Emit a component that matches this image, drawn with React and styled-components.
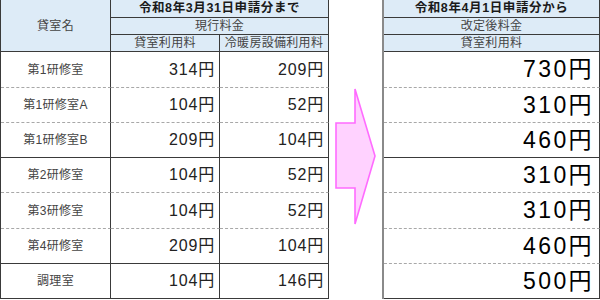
import styled, { createGlobalStyle } from 'styled-components'

const GlobalStyle = createGlobalStyle`
  * { box-sizing: border-box; }
  body {
    margin: 0;
    background: #fff;
    font-family: "Liberation Sans", "Noto Sans CJK JP", sans-serif;
  }
`

const rooms = [
  { name: '第1研修室', room: '314円', air: '209円', next: '730円', h: 36 },
  { name: '第1研修室A', room: '104円', air: '52円', next: '310円', h: 35 },
  { name: '第1研修室B', room: '209円', air: '104円', next: '460円', h: 35, solid: true },
  { name: '第2研修室', room: '104円', air: '52円', next: '310円', h: 35 },
  { name: '第3研修室', room: '104円', air: '52円', next: '310円', h: 36 },
  { name: '第4研修室', room: '209円', air: '104円', next: '460円', h: 35, solid: true },
  { name: '調理室', room: '104円', air: '146円', next: '500円', h: 35, solid: true },
]

export default function App() {
  return (
    <>
      <GlobalStyle />
      <Page>
        <LeftTable>
          <colgroup>
            <col style={{ width: 110 }} />
            <col style={{ width: 109 }} />
            <col style={{ width: 109 }} />
          </colgroup>
          <thead>
            <tr>
              <HeadCell rowSpan={3} $h={51}>貸室名</HeadCell>
              <HeadCell colSpan={2} $h={18} $bold>令和8年3月31日申請分まで</HeadCell>
            </tr>
            <tr>
              <HeadCell colSpan={2} $h={17}>現行料金</HeadCell>
            </tr>
            <tr>
              <HeadCell $h={17}>貸室利用料</HeadCell>
              <HeadCell $h={17}>冷暖房設備利用料</HeadCell>
            </tr>
          </thead>
          <tbody>
            {rooms.map((r) => (
              <tr key={r.name}>
                <NameCell $h={r.h} $solid={r.solid}>{r.name}</NameCell>
                <PriceCell $h={r.h} $solid={r.solid}>{r.room}</PriceCell>
                <PriceCell $h={r.h} $solid={r.solid}>{r.air}</PriceCell>
              </tr>
            ))}
          </tbody>
        </LeftTable>

        <ArrowArea>
          <svg width="42" height="138" viewBox="0 0 42 138">
            <polygon
              points="1,35 20,35 20,1 40,68 20,136 20,100 1,100"
              fill="#ffd2ff"
              stroke="#ff6bff"
              strokeWidth="1.6"
              strokeLinejoin="miter"
            />
          </svg>
        </ArrowArea>

        <RightTable>
          <thead>
            <tr>
              <HeadCell $h={18} $bold>令和8年4月1日申請分から</HeadCell>
            </tr>
            <tr>
              <HeadCell $h={17}>改定後料金</HeadCell>
            </tr>
            <tr>
              <HeadCell $h={17}>貸室利用料</HeadCell>
            </tr>
          </thead>
          <tbody>
            {rooms.map((r, i) => (
              <tr key={r.name}>
                <NewPriceCell $h={r.h} $solid={i === 2 || i === 6}>{r.next}</NewPriceCell>
              </tr>
            ))}
          </tbody>
        </RightTable>
      </Page>
    </>
  )
}

const Page = styled.div`
  display: flex;
  align-items: flex-start;
  width: 600px;
  height: 300px;
`

const LeftTable = styled.table`
  width: 328px;
  table-layout: fixed;
  border-collapse: separate;
  border-spacing: 0;
  border-left: 1px solid #3a3a3a;
  flex-shrink: 0;
`

const RightTable = styled.table`
  width: 218px;
  table-layout: fixed;
  border-collapse: separate;
  border-spacing: 0;
  border-left: 2px solid #8a8a8a;
  flex-shrink: 0;
`

const HeadCell = styled.th`
  height: ${({ $h }) => $h}px;
  padding: 0;
  background: #ddebf7;
  border-right: 1px solid #3a3a3a;
  border-bottom: 1px solid #3a3a3a;
  font-size: ${({ $bold }) => ($bold ? '12.5px' : '12px')};
  line-height: 1;
  font-weight: ${({ $bold }) => ($bold ? 700 : 400)};
  color: ${({ $bold }) => ($bold ? '#1a1a1a' : '#444')};
  letter-spacing: ${({ $bold }) => ($bold ? '0.6px' : '0.3px')};
  text-align: center;
  white-space: nowrap;
`

const BodyCell = styled.td`
  height: ${({ $h }) => $h}px;
  padding: 0;
  border-right: 1px solid #3a3a3a;
  border-bottom: ${({ $solid }) => ($solid ? '1px solid #3a3a3a' : '1px dashed #a8a8a8')};
  line-height: 1;
  white-space: nowrap;
`

const NameCell = styled(BodyCell)`
  text-align: center;
  font-size: 12px;
  color: #444;
  letter-spacing: 0.3px;
`

const PriceCell = styled(BodyCell)`
  text-align: right;
  padding-right: 4px;
  font-size: 16px;
  color: #222;
  letter-spacing: 0.8px;
`

const NewPriceCell = styled(BodyCell)`
  text-align: right;
  padding-right: 5px;
  font-size: 23px;
  color: #000;
  letter-spacing: 2.4px;
`

const ArrowArea = styled.div`
  width: 53px;
  flex-shrink: 0;
  padding: 88px 0 0 6px;
  svg {
    display: block;
  }
`
